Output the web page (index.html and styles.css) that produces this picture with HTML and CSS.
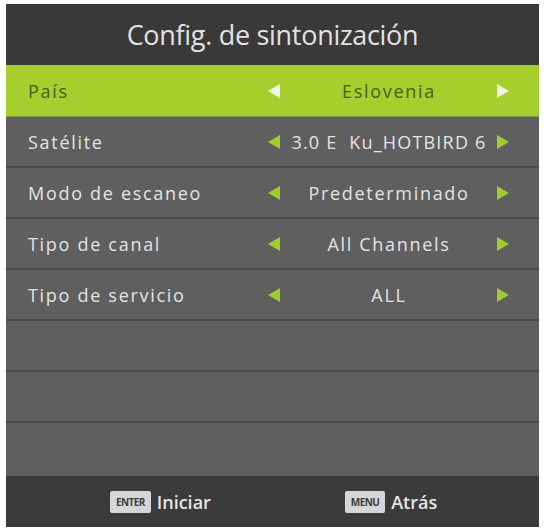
FILE: index.html
```html
<!DOCTYPE html>
<html lang="es">
<head>
    <meta charset="UTF-8">
    <title>Config. de sintonización</title>
    <link rel="stylesheet" href="styles.css">
</head>
<body>
    <div class="screen">
        <div class="title">Config. de sintonización</div>

        <div class="menu">
            <!-- fila seleccionada -->
            <div class="row active">
                <span class="label">País</span>
                <svg class="arrow" viewBox="0 0 12 14"><polygon points="12,0 12,14 0,7"/></svg>
                <span class="value">Eslovenia</span>
                <svg class="arrow" viewBox="0 0 12 14"><polygon points="0,0 0,14 12,7"/></svg>
            </div>
            <div class="row">
                <span class="label">Satélite</span>
                <svg class="arrow" viewBox="0 0 12 14"><polygon points="12,0 12,14 0,7"/></svg>
                <span class="value tight">3.0 E&nbsp; Ku_HOTBIRD 6</span>
                <svg class="arrow" viewBox="0 0 12 14"><polygon points="0,0 0,14 12,7"/></svg>
            </div>
            <div class="row">
                <span class="label">Modo de escaneo</span>
                <svg class="arrow" viewBox="0 0 12 14"><polygon points="12,0 12,14 0,7"/></svg>
                <span class="value">Predeterminado</span>
                <svg class="arrow" viewBox="0 0 12 14"><polygon points="0,0 0,14 12,7"/></svg>
            </div>
            <div class="row">
                <span class="label">Tipo de canal</span>
                <svg class="arrow" viewBox="0 0 12 14"><polygon points="12,0 12,14 0,7"/></svg>
                <span class="value">All Channels</span>
                <svg class="arrow" viewBox="0 0 12 14"><polygon points="0,0 0,14 12,7"/></svg>
            </div>
            <div class="row">
                <span class="label">Tipo de servicio</span>
                <svg class="arrow" viewBox="0 0 12 14"><polygon points="12,0 12,14 0,7"/></svg>
                <span class="value">ALL</span>
                <svg class="arrow" viewBox="0 0 12 14"><polygon points="0,0 0,14 12,7"/></svg>
            </div>
            <div class="row empty"></div>
            <div class="row empty"></div>
            <div class="row empty last"></div>
        </div>

        <div class="footer">
            <div class="hint"><span class="key">ENTER</span>Iniciar</div>
            <div class="hint"><span class="key">MENU</span>Atrás</div>
        </div>
    </div>
</body>
</html>
```

FILE: styles.css
```css
body {
    margin: 0;
    background-color: #fff;
    font-family: "Open Sans", "DejaVu Sans", sans-serif;
}
.screen {
    width: 533px;
    margin: 4px 0 0 6px;
    background-color: #5f5f5f;
}
.title {
    height: 61px;
    display: flex;
    align-items: center;
    justify-content: center;
    background-color: #393939;
    color: #e2e2e2;
    font-size: 27px;
    letter-spacing: -0.3px;
}
.row {
    height: 49px;
    display: grid;
    grid-template-columns: 240px 13px 1fr 13px;
    align-items: center;
    padding: 0 29px 0 22px;
    border-bottom: 2px solid #4b4b4b;
    color: #e4e4e4;
    font-size: 18px;
    letter-spacing: 1.7px;
}
.row.active {
    height: 51px;
    background-color: #a6cf2e;
    color: #40601a;
    border-bottom: 1px solid #7f9a30;
}
.row.last {
    height: 53px;
    border-bottom: none;
}
.label {
    white-space: nowrap;
}
.value {
    text-align: center;
    white-space: nowrap;
}
.value.tight {
    letter-spacing: 1.2px;
}
.arrow {
    width: 12px;
    height: 14px;
    fill: #9fcc2e;
}
.row.active .arrow {
    fill: #f0f4e6;
}
/* barra inferior con teclas */
.footer {
    height: 51px;
    display: flex;
    align-items: center;
    gap: 134px;
    padding-left: 104px;
    background-color: #3b3b3b;
    color: #e6e6e6;
    font-size: 18px;
    font-weight: 600;
}
.hint {
    display: flex;
    align-items: center;
    gap: 6px;
}
.key {
    background-color: #d6d6d6;
    color: #3c3c3c;
    font-size: 10px;
    font-weight: bold;
    letter-spacing: -0.6px;
    padding: 4px 6px;
    border-radius: 2px;
}
```
